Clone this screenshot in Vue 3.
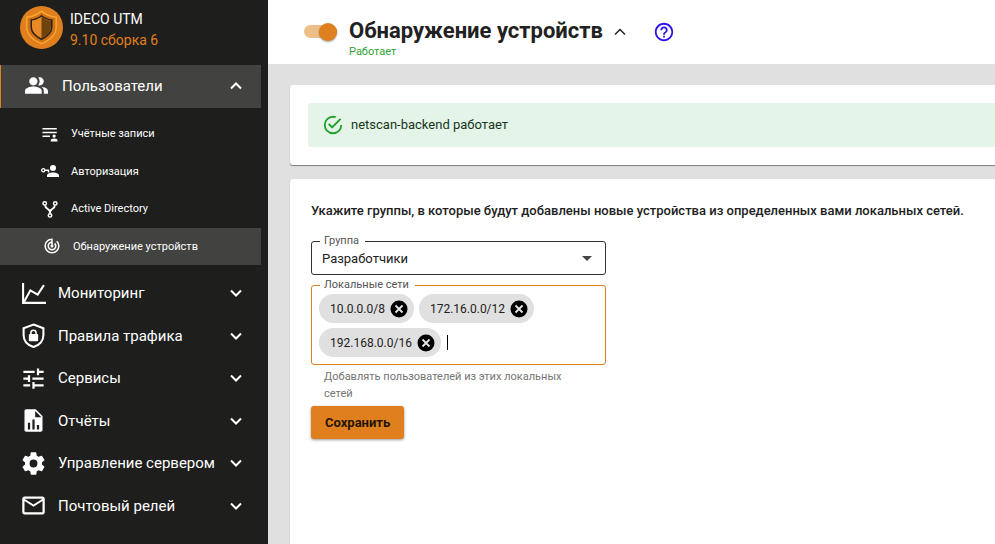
<script setup>
import { ref } from 'vue'

const subItems = [
  { label: 'Учётные записи', icon: 'accounts' },
  { label: 'Авторизация', icon: 'auth' },
  { label: 'Active Directory', icon: 'directory' },
  { label: 'Обнаружение устройств', icon: 'discovery', active: true },
]

const sections = [
  { label: 'Мониторинг', icon: 'chart' },
  { label: 'Правила трафика', icon: 'shield' },
  { label: 'Сервисы', icon: 'tune' },
  { label: 'Отчёты', icon: 'report' },
  { label: 'Управление сервером', icon: 'gear' },
  { label: 'Почтовый релей', icon: 'mail' },
]

const icons = {
  accounts:
    'M2 4h19v2H2zM2 9h19v2H2zM2 14h10v2H2zM17.500 12.500a2.200 2.200 0 1 1 0 4.400a2.200 2.200 0 0 1 0-4.400zM13 22v-1.500q0-2.500 4.500-2.500t4.500 2.500v1.500z',
  auth:
    'M16 4a4 4 0 1 1 0 8a4 4 0 0 1 0-8zM16 14c4.420 0 8 1.790 8 4v2H8v-2c0-2.210 3.580-4 8-4zM5.830 10H11V14H9V12H5.830A3 3 0 1 1 5.830 10zM3 9.800a1.200 1.200 0 1 0 0 2.400a1.200 1.200 0 0 0 0-2.400z',
  discovery:
    'M19.070 4.930l-1.410 1.410C19.100 7.790 20 9.790 20 12c0 4.420-3.580 8-8 8s-8-3.580-8-8c0-4.080 3.050-7.440 7-7.930v2.020C8.160 6.570 6 9.030 6 12c0 3.310 2.690 6 6 6s6-2.690 6-6c0-1.660-.67-3.160-1.760-4.240l-1.410 1.410C15.550 9.900 16 10.900 16 12c0 2.210-1.790 4-4 4s-4-1.790-4-4c0-1.860 1.280-3.410 3-3.860v2.140c-.6.35-1 .98-1 1.720 0 1.100.9 2 2 2s2-.9 2-2c0-.74-.4-1.380-1-1.720V2h-1C6.480 2 2 6.480 2 12s4.480 10 10 10 10-4.480 10-10c0-2.760-1.120-5.260-2.930-7.070z',
  tune:
    'M3 17v2h6v-2H3zM3 5v2h10V5H3zm10 16v-2h8v-2h-8v-2h-2v6h2zM7 9v2H3v2h4v2h2V9H7zm14 4v-2H11v2h10zm-6-4h2V7h4V5h-4V3h-2v6z',
  report:
    'M14 2H5.500C4.500 2 4 2.700 4 3.500v17c0 .8.700 1.500 1.500 1.500h13c.8 0 1.500-.7 1.500-1.500V8zM13.500 9V3.500L19 9zM7 20v-6h2v6zm4 0v-9h2v9zm4 0v-4h2v4z',
  gear:
    'M12 15.500A3.500 3.500 0 0 1 8.500 12 3.500 3.500 0 0 1 12 8.500a3.500 3.500 0 0 1 3.500 3.500 3.500 3.500 0 0 1-3.500 3.500m7.430-2.530c.04-.32.070-.64.070-.97s-.03-.66-.07-1l2.110-1.630c.19-.15.240-.42.120-.64l-2-3.460c-.12-.22-.39-.31-.61-.22l-2.490 1c-.52-.39-1.060-.73-1.690-.98l-.37-2.650A.506.506 0 0 0 14 2h-4c-.25 0-.46.180-.5.420l-.37 2.650c-.63.250-1.170.590-1.690.980l-2.490-1c-.22-.09-.49 0-.61.220l-2 3.460c-.13.220-.07.490.120.640L4.570 11c-.04.340-.07.670-.07 1s.03.650.070.970l-2.110 1.660c-.19.150-.25.420-.12.640l2 3.460c.12.220.390.300.610.220l2.490-1.010c.52.400 1.060.740 1.690.990l.37 2.650c.04.240.250.420.500.420h4c.25 0 .46-.18.500-.42l.37-2.650c.63-.26 1.170-.59 1.690-.99l2.490 1.010c.22.080.490 0 .61-.22l2-3.460c.12-.22.070-.49-.12-.64z',
  mail:
    'M22 6c0-1.100-.9-2-2-2H4c-1.100 0-2 .9-2 2v12c0 1.100.9 2 2 2h16c1.100 0 2-.9 2-2zm-2 0l-8 5-8-5zm0 12H4V8l8 5 8-5z',
}

const enabled = ref(true)
const group = ref('Разработчики')
const draft = ref('')
const networks = ref(['10.0.0.0/8', '172.16.0.0/12', '192.168.0.0/16'])

function removeNetwork(net) {
  networks.value = networks.value.filter((n) => n !== net)
}
function addNetwork() {
  if (draft.value.trim()) networks.value.push(draft.value.trim())
  draft.value = ''
}
</script>

<template>
  <div class="layout">
    <aside class="sidebar">
      <div class="brand">
        <svg class="logo" viewBox="0 0 44 44" aria-hidden="true">
          <circle cx="22" cy="22" r="22" fill="#e07f1e" />
          <path d="M22 5.500q6 5 15 6v10q0 10.500-15 17q-15-6.500-15-17v-10q9-1 15-6z" fill="#cf7119" stroke="#fba62d" stroke-width="1.500" />
          <path d="M22 10q5 4 10.500 4.200v7.300q0 7.500-10.500 12.500q-10.500-5-10.500-12.500v-7.300q5.500-.2 10.500-4.200z" fill="#e88a25" stroke="#2a2118" stroke-width="1.500" />
          <path d="M22 11q5 3.800 9.700 4v6.500q0 7-9.700 11.700z" fill="#6e430d" />
        </svg>
        <div class="brand-text">
          <span>IDECO UTM</span>
          <span class="version">9.10 сборка 6</span>
        </div>
      </div>

      <nav>
        <button type="button" class="section open" aria-expanded="true">
          <svg class="icon-people" viewBox="0 0 24 24" fill="currentColor" aria-hidden="true">
            <path d="M16.670 13.130C18.040 14.060 19 15.320 19 17v3h4v-3c0-2.180-3.570-3.470-6.330-3.870zM15 12c2.210 0 4-1.790 4-4s-1.790-4-4-4c-.47 0-.91.100-1.330.240C14.500 5.270 15 6.580 15 8s-.5 2.730-1.330 3.760c.42.140.860.240 1.330.240zM9 12c2.210 0 4-1.790 4-4s-1.790-4-4-4-4 1.790-4 4 1.790 4 4 4zM9 13c-2.670 0-8 1.340-8 4v3h16v-3c0-2.660-5.330-4-8-4z" />
          </svg>
          <span>Пользователи</span>
          <svg class="chevron" viewBox="0 0 12 8" aria-hidden="true"><path d="M1 6.500l5-5 5 5" /></svg>
        </button>

        <div class="sub-list">
          <a v-for="item in subItems" :key="item.label" href="#" class="sub" :class="{ active: item.active }">
            <svg v-if="item.icon === 'directory'" viewBox="0 0 24 24" fill="none" stroke="currentColor" stroke-width="2" aria-hidden="true">
              <circle cx="5" cy="4.500" r="2.300" /><circle cx="19" cy="4.500" r="2.300" /><circle cx="12" cy="20.500" r="2.300" />
              <path d="M5.500 7q0 3 3.500 5t3 5.500q-.5-3.500 3-5.500t3.500-5" stroke-width="2.500" />
            </svg>
            <svg v-else viewBox="0 0 24 24" fill="currentColor" fill-rule="evenodd" aria-hidden="true">
              <path :d="icons[item.icon]" />
            </svg>
            <span>{{ item.label }}</span>
          </a>
        </div>

        <div class="section-list">
          <button v-for="item in sections" :key="item.label" type="button" class="section">
            <svg v-if="item.icon === 'chart'" viewBox="0 0 24 24" fill="none" stroke="currentColor" stroke-width="2" aria-hidden="true">
              <path d="M2 2v19h22M3 20l6-11 7 4 6-9" />
            </svg>
            <svg v-else-if="item.icon === 'shield'" viewBox="0 0 24 24" fill="none" stroke="currentColor" stroke-width="2" aria-hidden="true">
              <path d="M12 1.500l9.500 3.500v6.500q0 8.500-9.500 11.500q-9.500-3-9.500-11.500V5z" />
              <path d="M9.500 11V9.500a2.500 2.500 0 0 1 5 0V11" stroke-width="1.500" />
              <rect x="7.500" y="10.500" width="9" height="7" rx="1" fill="currentColor" stroke="none" />
            </svg>
            <svg v-else viewBox="0 0 24 24" fill="currentColor" :class="item.icon" aria-hidden="true">
              <path :d="icons[item.icon]" fill-rule="evenodd" />
            </svg>
            <span>{{ item.label }}</span>
            <svg class="chevron" viewBox="0 0 12 8" aria-hidden="true"><path d="M1 1.500l5 5 5-5" /></svg>
          </button>
        </div>
      </nav>
    </aside>

    <div class="page">
      <header class="topbar">
        <input v-model="enabled" class="toggle" type="checkbox" aria-label="Обнаружение устройств" />
        <div class="title">
          <h1>Обнаружение устройств</h1>
          <span class="status">Работает</span>
        </div>
        <button type="button" class="plain collapse" aria-label="Свернуть">
          <svg class="chevron" viewBox="0 0 12 8" aria-hidden="true"><path d="M1 6.500l5-5 5 5" /></svg>
        </button>
        <button type="button" class="plain help" aria-label="Справка">
          <svg viewBox="0 0 24 24" fill="currentColor" aria-hidden="true">
            <path d="M11 18h2v-2h-2v2zm1-16C6.480 2 2 6.480 2 12s4.480 10 10 10 10-4.480 10-10S17.520 2 12 2zm0 18c-4.410 0-8-3.590-8-8s3.590-8 8-8 8 3.590 8 8-3.590 8-8 8zm0-14c-2.210 0-4 1.790-4 4h2c0-1.100.9-2 2-2s2 .9 2 2c0 2-3 1.750-3 5h2c0-2.250 3-2.500 3-5 0-2.210-1.790-4-4-4z" />
          </svg>
        </button>
      </header>

      <main>
        <section class="card status-card">
          <div class="alert" role="status">
            <svg viewBox="0 0 24 24" fill="currentColor" aria-hidden="true">
              <path d="M20 12a8 8 0 0 1-8 8 8 8 0 0 1-8-8 8 8 0 0 1 8-8c.76 0 1.500.110 2.200.310l1.570-1.570A9.822 9.822 0 0 0 12 2 10 10 0 0 0 2 12a10 10 0 0 0 10 10 10 10 0 0 0 10-10M7.910 10.080L6.500 11.500 11 16 21 6l-1.410-1.420L11 13.170l-3.090-3.090z" />
            </svg>
            <span>netscan-backend работает</span>
          </div>
        </section>

        <section class="card form-card">
          <form @submit.prevent>
            <h2>Укажите группы, в которые будут добавлены новые устройства из определенных вами локальных сетей.</h2>

            <fieldset class="field group-field">
              <legend><label for="group">Группа</label></legend>
              <select id="group" v-model="group">
                <option>Разработчики</option>
              </select>
              <svg viewBox="0 0 10 5" aria-hidden="true"><path d="M0 0h10l-5 5z" fill="currentColor" /></svg>
            </fieldset>

            <fieldset class="field nets-field">
              <legend><label for="networks">Локальные сети</label></legend>
              <div class="chips">
                <span v-for="net in networks" :key="net" class="chip">
                  {{ net }}
                  <button type="button" :aria-label="'Удалить ' + net" @click="removeNetwork(net)">
                    <svg viewBox="0 0 18 18" aria-hidden="true">
                      <circle cx="9" cy="9" r="8.500" fill="#000" />
                      <path d="M5.500 5.500l7 7M12.500 5.500l-7 7" stroke="#e8e8e8" stroke-width="1.800" />
                    </svg>
                  </button>
                </span>
                <span class="entry">
                  <input id="networks" v-model="draft" type="text" @keydown.enter.prevent="addNetwork" />
                </span>
              </div>
            </fieldset>
            <p class="hint">Добавлять пользователей из этих локальных сетей</p>

            <button type="submit" class="save">Сохранить</button>
          </form>
        </section>
      </main>
    </div>
  </div>
</template>

<style>
body {
  background: #e0e0e0;
}
</style>

<style scoped>
.layout {
  display: flex;
  min-height: 100vh;
  overflow: hidden;
  font-family: Roboto, 'Liberation Sans', sans-serif;
  color: #212121;
}
.layout *,
.layout *::before {
  box-sizing: border-box;
}
button,
input,
select {
  font: inherit;
  color: inherit;
}
svg {
  display: block;
  flex: none;
}

/* Sidebar */
.sidebar {
  flex: none;
  width: 268px;
  padding-right: 7px;
  background: #1e1e1c;
  color: #fff;
}
.brand {
  display: flex;
  align-items: center;
  gap: 7px;
  height: 65px;
  padding: 0 20px 10px;
}
.logo {
  width: 43px;
  height: 43px;
}
.brand-text {
  display: flex;
  flex-direction: column;
  padding-top: 4px;
  font-size: 14px;
  line-height: 21px;
}
.version {
  color: #e07f1e;
}
.section {
  display: flex;
  align-items: center;
  gap: 12px;
  width: 100%;
  padding: 0 19px 0 21px;
  border: 0;
  background: none;
  font-size: 15px;
  text-align: left;
}
.section > svg:first-child {
  width: 25px;
  height: 25px;
}
.section > svg.gear,
.section > svg.mail,
.section > svg.report,
.section > svg.tune {
  width: 27px;
  height: 27px;
  margin: 0 -1px;
}
.chevron {
  width: 12px;
  height: 8px;
  fill: none;
  stroke: currentColor;
  stroke-width: 2;
}
.section .chevron {
  margin-left: auto;
}
.section.open {
  gap: 13px;
  height: 43px;
  padding-left: 23px;
  padding-bottom: 2px;
  border-left: 1px solid #e07f1e;
  background: #424240;
}
.sub-list {
  display: grid;
  grid-auto-rows: 1fr;
  height: 150px;
  margin-top: 7px;
}
.sub {
  display: flex;
  align-items: center;
  gap: 12px;
  padding-left: 41px;
  color: inherit;
  font-size: 11px;
  text-decoration: none;
}
.sub svg {
  width: 18px;
  height: 18px;
}
.sub.active {
  padding-left: 43px;
  background: #424240;
}
.section-list {
  display: grid;
  grid-auto-rows: 1fr;
  height: 255px;
  margin-top: 7px;
}

/* Header */
.page {
  flex: 1;
  min-width: 0;
  background: #e0e0e0;
}
.topbar {
  display: flex;
  height: 64px;
  padding: 16px 36px 0;
  background: #fff;
}
.toggle {
  appearance: none;
  display: flex;
  align-items: center;
  width: 33px;
  height: 13px;
  margin: 9px 12px 0 0;
  border-radius: 7px;
  background: #bdbdbd;
}
.toggle::before {
  content: '';
  width: 18px;
  height: 18px;
  flex: none;
  border-radius: 50%;
  background: #fafafa;
  box-shadow: 0 1px 2px rgba(0, 0, 0, 0.4);
}
.toggle:checked {
  justify-content: flex-end;
  background: #ecbf89;
}
.toggle:checked::before {
  background: #e07f1e;
}
.title {
  display: flex;
  flex-direction: column;
}
h1 {
  margin: 0;
  font-size: 22px;
  line-height: 29px;
  font-weight: 700;
}
.status {
  font-size: 11px;
  line-height: 13px;
  color: #2fa336;
}
.plain {
  display: flex;
  align-items: center;
  height: 31px;
  padding: 0;
  border: 0;
  background: none;
}
.collapse {
  margin-left: 11px;
}
.collapse .chevron {
  stroke-width: 1.5;
}
.help {
  margin-left: 27px;
  color: #2a14f0;
}
.help svg {
  width: 22px;
  height: 22px;
}

/* Cards */
main {
  padding: 21px 0 0 22px;
}
.card {
  border-radius: 3px 0 0 3px;
  background: #fff;
  box-shadow: 0 1px 1px rgba(0, 0, 0, 0.45);
}
.status-card {
  padding: 18px 0 18px 18px;
}
.alert {
  display: flex;
  align-items: center;
  gap: 7px;
  height: 44px;
  padding-left: 14px;
  border-radius: 3px 0 0 3px;
  background: #e5f4e9;
  color: #16361a;
  font-size: 13px;
  line-height: 16px;
}
.alert svg {
  width: 22px;
  height: 22px;
  color: #22a02a;
}
.form-card {
  min-height: 380px;
  margin-top: 14px;
  padding: 24px 21px;
}
h2 {
  margin: 0 0 16px;
  font-size: 13px;
  line-height: 16px;
  font-weight: 500;
}
.field {
  position: relative;
  width: 295px;
  margin: 0;
  padding: 0;
  border: 1px solid #333;
  border-radius: 3px;
}
.field legend {
  height: 12px;
  margin-left: 8px;
  padding: 0 6px 0 4px;
  font-size: 11px;
  line-height: 12px;
  color: #555;
}
.group-field select {
  display: block;
  appearance: none;
  width: 100%;
  height: 27px;
  padding: 0 10px 4px;
  border: 0;
  background: none;
  font-size: 13px;
  outline: 0;
}
.group-field svg {
  position: absolute;
  right: 13px;
  top: 9px;
  width: 10px;
  height: 5px;
  color: #444;
}
.nets-field {
  margin-top: 4px;
  border-color: #e07f1e;
}
.chips {
  display: flex;
  flex-wrap: wrap;
  gap: 5px;
  padding: 3px 8px 7px 7px;
}
.chip {
  display: flex;
  align-items: center;
  gap: 5px;
  height: 29px;
  padding: 0 6px 0 11px;
  border-radius: 15px;
  background: #e0e0e0;
  font-size: 12px;
}
.chip button {
  padding: 0;
  border: 0;
  background: none;
}
.chip svg {
  width: 18px;
  height: 18px;
}
.entry {
  display: flex;
  flex: 1;
  align-items: center;
}
.entry::before {
  content: '';
  width: 1px;
  height: 15px;
  margin-left: 1px;
  background: #000;
}
.entry input {
  flex: 1;
  width: 20px;
  min-width: 0;
  height: 24px;
  padding: 0;
  border: 0;
  outline: 0;
  background: none;
  font-size: 12px;
  caret-color: transparent;
}
.hint {
  width: 260px;
  margin: 3px 0 4px 13px;
  font-size: 11px;
  line-height: 17px;
  color: #757575;
}
.save {
  height: 33px;
  padding: 0 14px 1px;
  border: 0;
  border-radius: 3px;
  background: #e07f1e;
  box-shadow: 0 1px 3px rgba(0, 0, 0, 0.4);
  color: #241604;
  font-size: 13px;
  font-weight: 700;
}
</style>
